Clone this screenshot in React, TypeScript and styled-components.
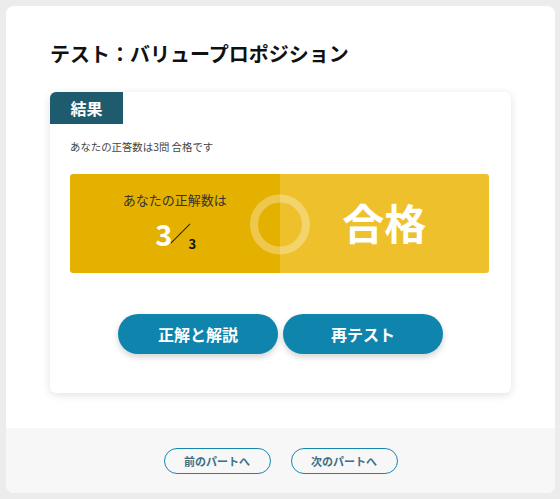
import styled, { createGlobalStyle } from "styled-components";

const GlobalStyle = createGlobalStyle`
  body {
    margin: 0;
    background: #ececec;
    font-family: "Noto Sans CJK JP", "Noto Sans", sans-serif;
  }
`;

export default function App() {
    const correct = 3;
    const total = 3;

    return (<Page>
        <GlobalStyle />
        <Panel>
            <Main>
                <Title>テスト：バリュープロポジション</Title>
                <Card>
                    <Tab>結果</Tab>
                    <Summary>あなたの正答数は{correct}問 合格です</Summary>
                    <ScoreBox>
                        <ScoreHalf $tone="dark">
                            <ScoreLabel>あなたの正解数は</ScoreLabel>
                            <ScoreRow>
                                <BigNum>{correct}</BigNum>
                                <Slash />
                                <SmallNum>{total}</SmallNum>
                            </ScoreRow>
                        </ScoreHalf>
                        <ScoreHalf $tone="light">
                            <Verdict>合格</Verdict>
                        </ScoreHalf>
                        <Ring />
                    </ScoreBox>
                    <Actions>
                        <PillButton>正解と解説</PillButton>
                        <PillButton>再テスト</PillButton>
                    </Actions>
                </Card>
            </Main>
            <Footer>
                <NavButton>前のパートへ</NavButton>
                <NavButton>次のパートへ</NavButton>
            </Footer>
        </Panel>
    </Page>)
}

const Page = styled.div`
  padding: 6px 5px 6px 6px;
`;

const Panel = styled.div`
  width: 549px;
  background: #fff;
  border-radius: 8px;
  overflow: hidden;
`;

const Main = styled.div`
  padding: 33px 44px 35px;
`;

const Title = styled.h1`
  margin: 0 0 23px;
  font-size: 20px;
  line-height: 30px;
  font-weight: 700;
  color: #111;
`;

const Card = styled.div`
  position: relative;
  height: 301px;
  box-sizing: border-box;
  background: #fff;
  border-radius: 6px;
  box-shadow: 0 2px 8px rgba(0, 0, 0, 0.12);
  display: flex;
  flex-direction: column;
`;

const Tab = styled.div`
  width: 73px;
  height: 32px;
  background: #1f5b6e;
  color: #fff;
  font-size: 16px;
  font-weight: 700;
  display: flex;
  align-items: center;
  justify-content: center;
  border-top-left-radius: 6px;
`;

const Summary = styled.p`
  margin: 15px 20px 0;
  font-size: 10.4px;
  line-height: 16px;
  color: #444;
`;

const ScoreBox = styled.div`
  position: relative;
  margin: 19px 22px 0 20px;
  height: 99px;
  border-radius: 3px;
  overflow: hidden;
  display: flex;
`;

const ScoreHalf = styled.div<{ $tone: "dark" | "light" }>`
  flex: 1;
  background: ${(p) => (p.$tone === "dark" ? "#e5b100" : "#eec02b")};
  display: flex;
  flex-direction: column;
  align-items: center;
  justify-content: center;
`;

const ScoreLabel = styled.div`
  font-size: 13px;
  line-height: 17px;
  color: #333;
  margin-top: -7px;
`;

const ScoreRow = styled.div`
  display: flex;
  align-items: flex-end;
  margin-top: 8px;
  margin-left: 2px;
`;

const BigNum = styled.span`
  font-size: 29px;
  line-height: 34px;
  font-weight: 700;
  color: #fff;
`;

const Slash = styled.span`
  width: 1px;
  height: 27px;
  background: #222;
  transform: rotate(45deg);
  margin: 0 7px 0 8px;
  position: relative;
  top: -3px;
`;

const SmallNum = styled.span`
  font-size: 13px;
  line-height: 16px;
  font-weight: 700;
  color: #111;
  margin-bottom: -2px;
`;

const Verdict = styled.div`
  font-size: 42px;
  line-height: 50px;
  font-weight: 700;
  color: #fff;
  margin-top: -4px;
`;

const Ring = styled.div`
  position: absolute;
  left: 50%;
  top: 50%;
  width: 60px;
  height: 60px;
  box-sizing: border-box;
  border: 8px solid rgba(255, 255, 255, 0.3);
  border-radius: 50%;
  transform: translate(-50%, -49%);
`;

const Actions = styled.div`
  display: flex;
  justify-content: center;
  gap: 5px;
  margin-top: 41px;
`;

const PillButton = styled.button`
  width: 160px;
  height: 40px;
  border: none;
  border-radius: 20px;
  background: #0f85ad;
  color: #fff;
  font-family: inherit;
  font-size: 16px;
  font-weight: 700;
  box-shadow: 0 3px 6px rgba(0, 0, 0, 0.18);
  cursor: pointer;
`;

const Footer = styled.div`
  background: #f7f7f7;
  height: 65px;
  display: flex;
  justify-content: center;
  align-items: center;
  gap: 20px;
`;

const NavButton = styled.button`
  width: 107px;
  height: 26px;
  border: 1px solid #1688b0;
  border-radius: 13px;
  background: transparent;
  color: #3c6f86;
  font-family: inherit;
  font-size: 11px;
  font-weight: 700;
  cursor: pointer;
  padding: 0;
`;
